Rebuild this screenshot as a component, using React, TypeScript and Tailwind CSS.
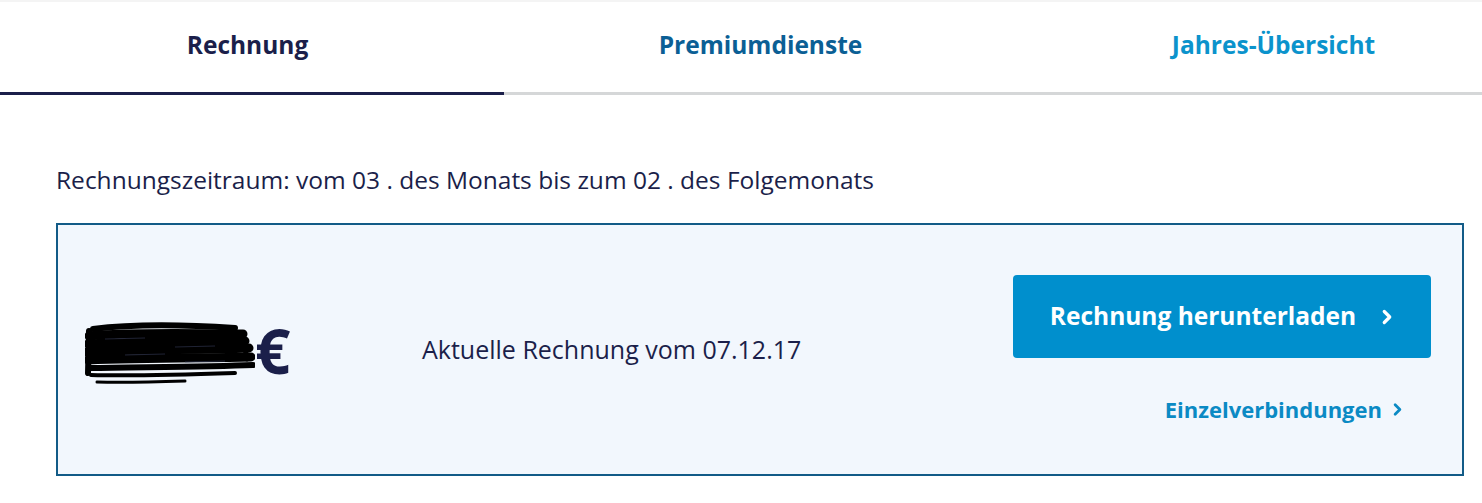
import { ChevronRight } from "lucide-react"

// Tabs shown at the top of the billing page
const tabs = [
  { label: "Rechnung", color: "text-[#1b1f4a]", active: true },
  { label: "Premiumdienste", color: "text-[#0b5f95]", active: false },
  { label: "Jahres-Übersicht", color: "text-[#0b93cc]", active: false },
]

// Black scribble that hides the invoice amount
function Scribble() {
  return (
    <svg width="170" height="66" viewBox="0 0 170 66" className="mt-[8px] shrink-0">
      <g fill="none" stroke="#000" strokeLinecap="round" strokeLinejoin="round">
        <path d="M8 8 C40 4, 90 3, 150 7" strokeWidth="6" />
        <path d="M4 15 C50 11, 110 13, 158 13" strokeWidth="9" />
        <path d="M3 23 C60 20, 120 21, 160 20" strokeWidth="9" />
        <path d="M2 31 C50 28, 110 29, 164 27" strokeWidth="9" />
        <path d="M3 39 C60 37, 120 37, 166 36" strokeWidth="9" />
        <path d="M5 47 C50 46, 120 46, 168 44" strokeWidth="6" />
        <path d="M6 54 C40 55, 90 54, 150 52" strokeWidth="4" />
        <path d="M12 61 C40 62, 70 61, 100 60" strokeWidth="3" />
        <path d="M4 10 L3 52" strokeWidth="6" />
        <path d="M150 12 C158 16, 160 26, 162 38" strokeWidth="5" />
      </g>
      <g fill="none" stroke="#3a4060" strokeWidth="0.8" opacity="0.7">
        <path d="M20 18 L60 17" />
        <path d="M90 26 L130 25" />
        <path d="M40 34 L80 33" />
        <path d="M100 41 L140 40" />
      </g>
    </svg>
  )
}

export default function App() {
  return (
    <div className="min-h-[503px] w-[1482px] overflow-hidden bg-white font-['Open_Sans','Noto_Sans',sans-serif] text-[#1b1f4a]">
      <div className="h-[2px] bg-[#f4f4f4]" /> {/* thin top strip */}

      {/* Tab bar */}
      <div className="border-b-[3px] border-[#d5d7d8]">
        <div className="-mb-[3px] ml-[-9px] flex">
          {tabs.map((tab) => (
            <div
              key={tab.label}
              className={
                tab.active
                  ? "flex h-[93px] w-[513px] shrink-0 items-center justify-center border-b-[3px] border-[#1b1f4a]"
                  : "flex h-[93px] w-[513px] shrink-0 items-center justify-center border-b-[3px] border-transparent"
              }
            >
              <span className={`pb-[4px] text-[24.5px] font-bold ${tab.color}`}>{tab.label}</span>
            </div>
          ))}
        </div>
      </div>

      {/* Content */}
      <div className="pl-[56px] pr-[18px]">
        <p className="pt-[70px] text-[24.5px] leading-[30px]">
          Rechnungszeitraum: vom 03 . des Monats bis zum 02 . des Folgemonats
        </p>

        <div className="mt-[28px] flex h-[253px] items-center justify-between border-2 border-[#125b87] bg-[#f2f7fd] pl-[27px] pr-[31px]">
          <div className="flex items-center">
            <div className="flex w-[337px] items-center">
              <Scribble />
              <span className="text-[62px] font-bold leading-none text-[#1b1f4a]">€</span>
            </div>
            <span className="text-[25px]">Aktuelle Rechnung vom 07.12.17</span>
          </div>

          <div className="flex flex-col items-end pt-[2px]">
            <button className="flex h-[83px] w-[418px] items-center justify-center gap-[20px] rounded-[4px] bg-[#008fcd] pl-[4px] text-[24.5px] font-bold text-white">
              Rechnung herunterladen
              <ChevronRight className="h-[22px] w-[22px]" strokeWidth={3.5} />
            </button>
            <a className="mr-[24px] mt-[34px] flex items-center gap-[6px] text-[22px] font-bold leading-[34px] text-[#0b8ac4]">
              Einzelverbindungen
              <ChevronRight className="h-[19px] w-[19px]" strokeWidth={3.5} />
            </a>
          </div>
        </div>
      </div>
    </div>
  )
}
